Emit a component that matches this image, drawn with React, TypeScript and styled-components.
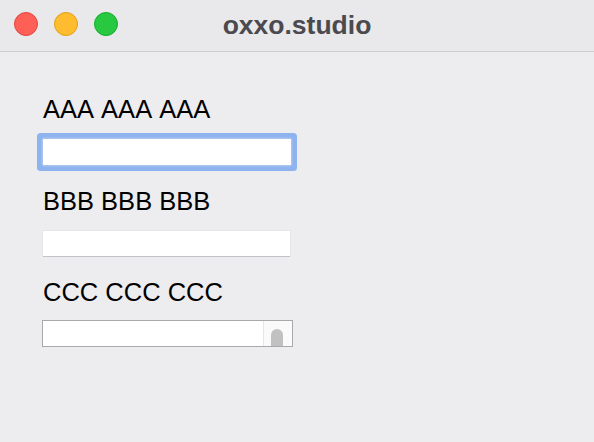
import React from "react";
import styled, { createGlobalStyle } from "styled-components";

const Global = createGlobalStyle`
  html, body { margin: 0; padding: 0; }
  body {
    width: 594px;
    height: 442px;
    overflow: hidden;
    background: #edecef;
    font-family: "Liberation Sans", Arial, sans-serif;
  }
`;

const Window = styled.div`
  width: 594px;
  height: 442px;
  display: flex;
  flex-direction: column;
  background: #edecef;
`;

const TitleBar = styled.div`
  height: 52px;
  box-sizing: border-box;
  border-bottom: 1px solid #cdcccf;
  background: #e9e8eb;
  display: grid;
  grid-template-columns: 1fr auto 1fr;
  align-items: center;
  padding: 0 14px;
`;

const Lights = styled.div`
  display: flex;
  gap: 16px;
  align-self: start;
  padding-top: 12px;
`;

const Light = styled.span<{ $c: string; $b: string }>`
  width: 24px;
  height: 24px;
  border-radius: 50%;
  box-sizing: border-box;
  background: ${(p) => p.$c};
  border: 1px solid ${(p) => p.$b};
`;

const Title = styled.div`
  font-weight: 700;
  font-size: 26.5px;
  color: #4b4a4e;
  line-height: 30px;
  padding-bottom: 2px;
`;

const Form = styled.div`
  display: flex;
  flex-direction: column;
  align-items: flex-start;
  padding: 42px 0 0 43px;
`;

const Label = styled.div<{ $gap: number }>`
  font-size: 25.5px;
  line-height: 30px;
  font-kerning: none;
  color: #000;
  margin-bottom: ${(p) => p.$gap}px;
`;

const FocusInput = styled.div`
  width: 248px;
  height: 26px;
  background: #fff;
  border-radius: 1px;
  box-shadow: 0 0 0 1.5px #a9c3ec, 0 0 0 6px #8db4ee;
  margin-bottom: 21px;
`;

const PlainInput = styled.div`
  width: 247px;
  height: 25px;
  background: #fff;
  box-shadow: 0 1px 0 #c3c2c6, 0 0 0 0.5px #dedde0;
  margin-bottom: 21px;
`;

const TextArea = styled.div`
  width: 251px;
  height: 27px;
  margin-left: -1px;
  box-sizing: border-box;
  border: 1px solid #a9a8ac;
  background: #fff;
  display: flex;
`;

const TextPart = styled.div`
  flex: 1;
`;

const Scrollbar = styled.div`
  width: 29px;
  box-sizing: border-box;
  border-left: 1px solid #e6e6e6;
  background: #fafafa;
  display: flex;
  align-items: flex-end;
  padding-left: 7px;
`;

const Thumb = styled.div`
  width: 12px;
  height: 17px;
  background: #c1c1c1;
  border-radius: 6px 6px 0 0;
`;

export default function App() {
  return (
    <>
      <Global />
      <Window>
        <TitleBar>
          <Lights>
            <Light $c="#fe5f57" $b="#e2463f" />
            <Light $c="#febc2e" $b="#e1a116" />
            <Light $c="#28c840" $b="#14ae2a" />
          </Lights>
          <Title>oxxo.studio</Title>
          <div />
        </TitleBar>
        <Form>
          <Label $gap={15}>AAA AAA AAA</Label>
          <FocusInput />
          <Label $gap={15}>BBB BBB BBB</Label>
          <PlainInput />
          <Label $gap={13}>CCC CCC CCC</Label>
          <TextArea>
            <TextPart />
            <Scrollbar>
              <Thumb />
            </Scrollbar>
          </TextArea>
        </Form>
      </Window>
    </>
  );
}
